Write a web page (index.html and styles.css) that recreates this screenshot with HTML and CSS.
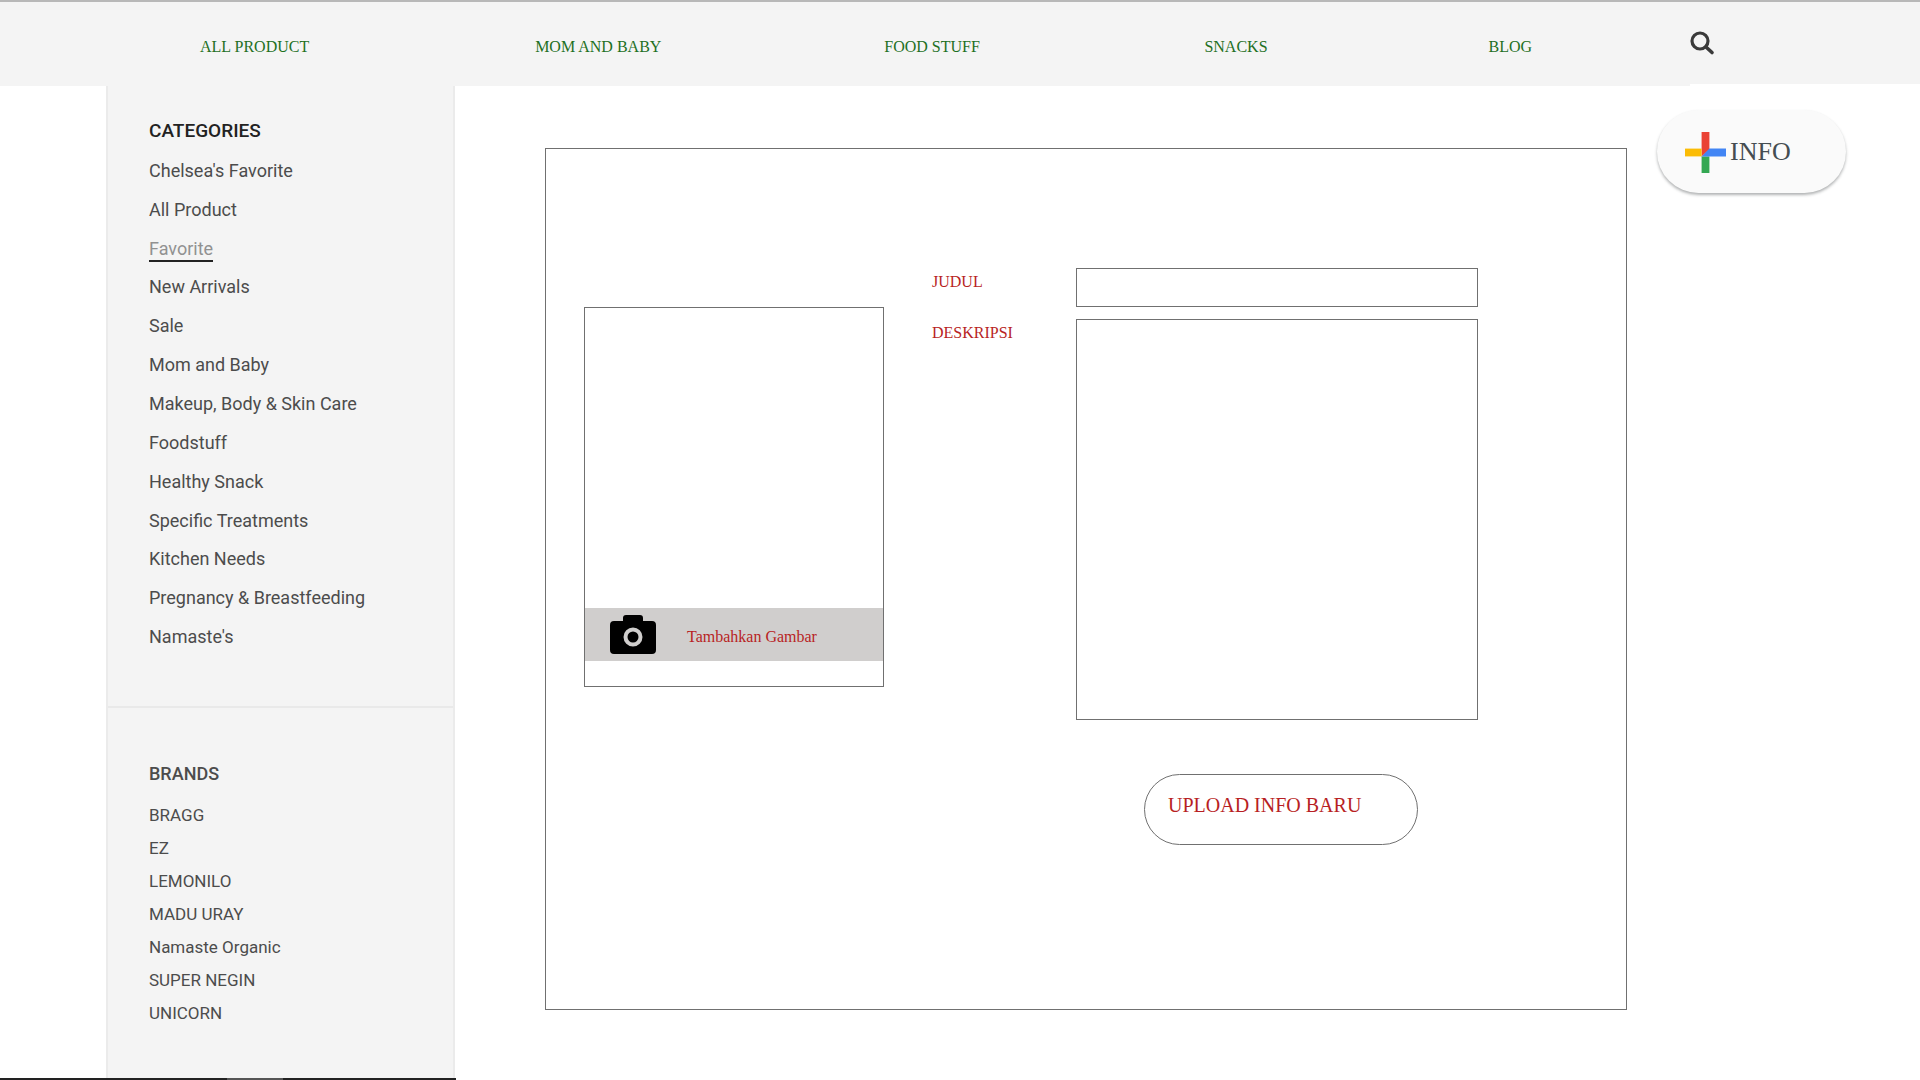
FILE: index.html
```html
<!DOCTYPE html>
<html lang="id">
<head>
<meta charset="utf-8">
<meta name="viewport" content="width=device-width, initial-scale=1">
<title>Info</title>
<link rel="stylesheet" href="styles.css">
</head>
<body>
<header class="topbar">
  <nav class="topnav">
    <a href="#">ALL PRODUCT</a>
    <a href="#">MOM AND BABY</a>
    <a href="#">FOOD STUFF</a>
    <a href="#">SNACKS</a>
    <a href="#">BLOG</a>
  </nav>
  <div class="search">
    <button class="search-button" type="button" aria-label="Search">
      <svg width="26" height="26" viewBox="0 0 26 26" fill="none" stroke="#3a3a3a">
        <circle cx="10" cy="11" r="8" stroke-width="3.2"/>
        <path d="M16 17l6 5.5" stroke-width="3.6" stroke-linecap="round"/>
      </svg>
    </button>
  </div>
</header>
<div class="page">
  <div class="side">
    <aside class="sidebar">
      <section class="categories">
        <h2 class="side-title">CATEGORIES</h2>
        <ul class="category-list">
          <li><a href="#">Chelsea's Favorite</a></li>
          <li><a href="#">All Product</a></li>
          <li><a class="active" href="#">Favorite</a></li>
          <li><a href="#">New Arrivals</a></li>
          <li><a href="#">Sale</a></li>
          <li><a href="#">Mom and Baby</a></li>
          <li><a href="#">Makeup, Body &amp; Skin Care</a></li>
          <li><a href="#">Foodstuff</a></li>
          <li><a href="#">Healthy Snack</a></li>
          <li><a href="#">Specific Treatments</a></li>
          <li><a href="#">Kitchen Needs</a></li>
          <li><a href="#">Pregnancy &amp; Breastfeeding</a></li>
          <li><a href="#">Namaste's</a></li>
        </ul>
      </section>
      <section class="brands">
        <h2 class="brand-title">BRANDS</h2>
        <ul class="brand-list">
          <li><a href="#">BRAGG</a></li>
          <li><a href="#">EZ</a></li>
          <li><a href="#">LEMONILO</a></li>
          <li><a href="#">MADU URAY</a></li>
          <li><a href="#">Namaste Organic</a></li>
          <li><a href="#">SUPER NEGIN</a></li>
          <li><a href="#">UNICORN</a></li>
        </ul>
      </section>
    </aside>
  </div>
  <main class="content">
    <form class="info-form">
      <div class="photo">
        <button class="photo-button" type="button">
          <svg width="46" height="39" viewBox="0 0 46 39">
            <path d="M4 6h9V3a3 3 0 0 1 3-3h14a3 3 0 0 1 3 3v3h9a4 4 0 0 1 4 4v25a4 4 0 0 1-4 4H4a4 4 0 0 1-4-4V10a4 4 0 0 1 4-4z" fill="#000"/>
            <circle cx="23" cy="22" r="7.5" fill="none" stroke="#d0cecd" stroke-width="4"/>
          </svg>
          <span class="photo-caption">Tambahkan Gambar</span>
        </button>
      </div>
      <div class="fields">
        <label for="judul">JUDUL</label>
        <input id="judul" type="text">
        <label for="deskripsi">DESKRIPSI</label>
        <textarea id="deskripsi"></textarea>
        <button class="upload" type="submit">UPLOAD INFO BARU</button>
      </div>
    </form>
    <button class="info-button" type="button">
      <svg width="41" height="41" viewBox="0 0 42 42">
        <path d="M17 0h8v18l-8 7z" fill="#ea4335"/>
        <path d="M0 17h17v8H0z" fill="#fbbc05"/>
        <path d="M17 25h8v17h-8z" fill="#34a853"/>
        <path d="M25 17h17v8H17z" fill="#4285f4"/>
      </svg>
      <span>INFO</span>
    </button>
  </main>
</div>
</body>
</html>
```
FILE: styles.css
```css
* { box-sizing: border-box; }

body {
  margin: 0;
  min-height: 100vh;
  display: flex;
  flex-direction: column;
  background: #fff;
  font-family: "Liberation Serif", "Times New Roman", serif;
  font-size: 16px;
}

a { color: inherit; text-decoration: none; }
ul { margin: 0; padding: 0; list-style: none; }
h2 { margin: 0; }
button { padding: 0; border: 0; background: none; font: inherit; color: inherit; cursor: pointer; }
svg { display: block; flex: none; }

.topbar {
  display: flex;
  align-items: flex-start;
}

.topnav {
  flex: 1;
  height: 86px;
  padding: 6px 0 0 200px;
  display: grid;
  grid-template-columns: 335fr 349fr 320fr 284fr 201fr;
  align-items: center;
  border-top: 2px solid #b8b8b8;
  background: #f4f4f4;
  color: #1f701f;
}

.search {
  width: 12%;
  height: 84px;
  padding-top: 28px;
  border-top: 2px solid #b8b8b8;
  background: #f4f4f4;
}

.page {
  flex: 1;
  display: flex;
}

.side {
  position: relative;
  width: 456px;
  padding: 0 1px 0 106px;
  border-bottom: 2px solid #222;
}

.side::after {
  content: "";
  position: absolute;
  left: 227px;
  bottom: -2px;
  width: 56px;
  height: 2px;
  background: #555;
}

.sidebar {
  height: 100%;
  border: solid #ebebeb;
  border-width: 0 2px;
  background: #f4f4f4;
  color: #4c4c4c;
  font-family: Roboto, "Liberation Sans", sans-serif;
  font-size: 18px;
}

.categories {
  padding: 29px 0 50px 41px;
  border-bottom: 2px solid #e9e9e9;
}

.side-title {
  color: #222;
  font-size: 19px;
  font-weight: 500;
  line-height: 32px;
}

.category-list {
  min-height: 509px;
  padding-top: 4px;
  display: grid;
  grid-auto-rows: 1fr;
  align-items: center;
}

.active {
  padding-bottom: 1px;
  border-bottom: 2px solid #222;
  color: #919191;
}

.brands {
  padding: 49px 0 40px 41px;
  font-size: 17px;
}

.brand-title {
  margin-bottom: 9px;
  font-size: 18px;
  font-weight: 500;
  line-height: 33px;
}

.brand-list { line-height: 33px; }

.content {
  flex: 1;
  padding: 62px 74px 70px 89px;
  display: flex;
  align-items: flex-start;
  gap: 30px;
}

.info-form {
  flex: 1;
  padding: 119px 148px 164px 38px;
  display: flex;
  align-items: flex-start;
  gap: 48px;
  border: 1px solid #707070;
  color: #b81f24;
}

.photo {
  width: 300px;
  height: 380px;
  margin-top: 39px;
  padding-bottom: 25px;
  display: flex;
  align-items: flex-end;
  border: 1px solid #707070;
}

.photo-button {
  width: 100%;
  height: 53px;
  padding-left: 25px;
  display: flex;
  align-items: center;
  gap: 31px;
  background: #d0cecd;
}

.photo-caption { padding-top: 4px; }

.fields {
  flex: 1;
  display: grid;
  grid-template-columns: 144px 1fr;
  row-gap: 12px;
}

.fields label { line-height: 28px; }

.fields input,
.fields textarea {
  width: 100%;
  margin: 0;
  padding: 8px;
  border: 1px solid #707070;
  border-radius: 0;
  background: #fff;
  font: inherit;
  resize: none;
}

.fields input { height: 39px; }
.fields textarea { height: 401px; }

.upload {
  grid-column: 2;
  width: 274px;
  height: 71px;
  margin: 42px 0 0 68px;
  padding: 0 0 8px 23px;
  border: 1px solid #707070;
  border-radius: 36px;
  font-size: 20px;
  text-align: left;
}

.info-button {
  width: 189px;
  height: 83px;
  margin-top: -38px;
  padding: 1px 0 0 28px;
  display: flex;
  align-items: center;
  gap: 4px;
  border-radius: 42px;
  background: #fafafa;
  box-shadow: 0 2px 3px rgba(60, 64, 67, 0.4);
  color: #454d51;
  font-size: 26px;
}
```
